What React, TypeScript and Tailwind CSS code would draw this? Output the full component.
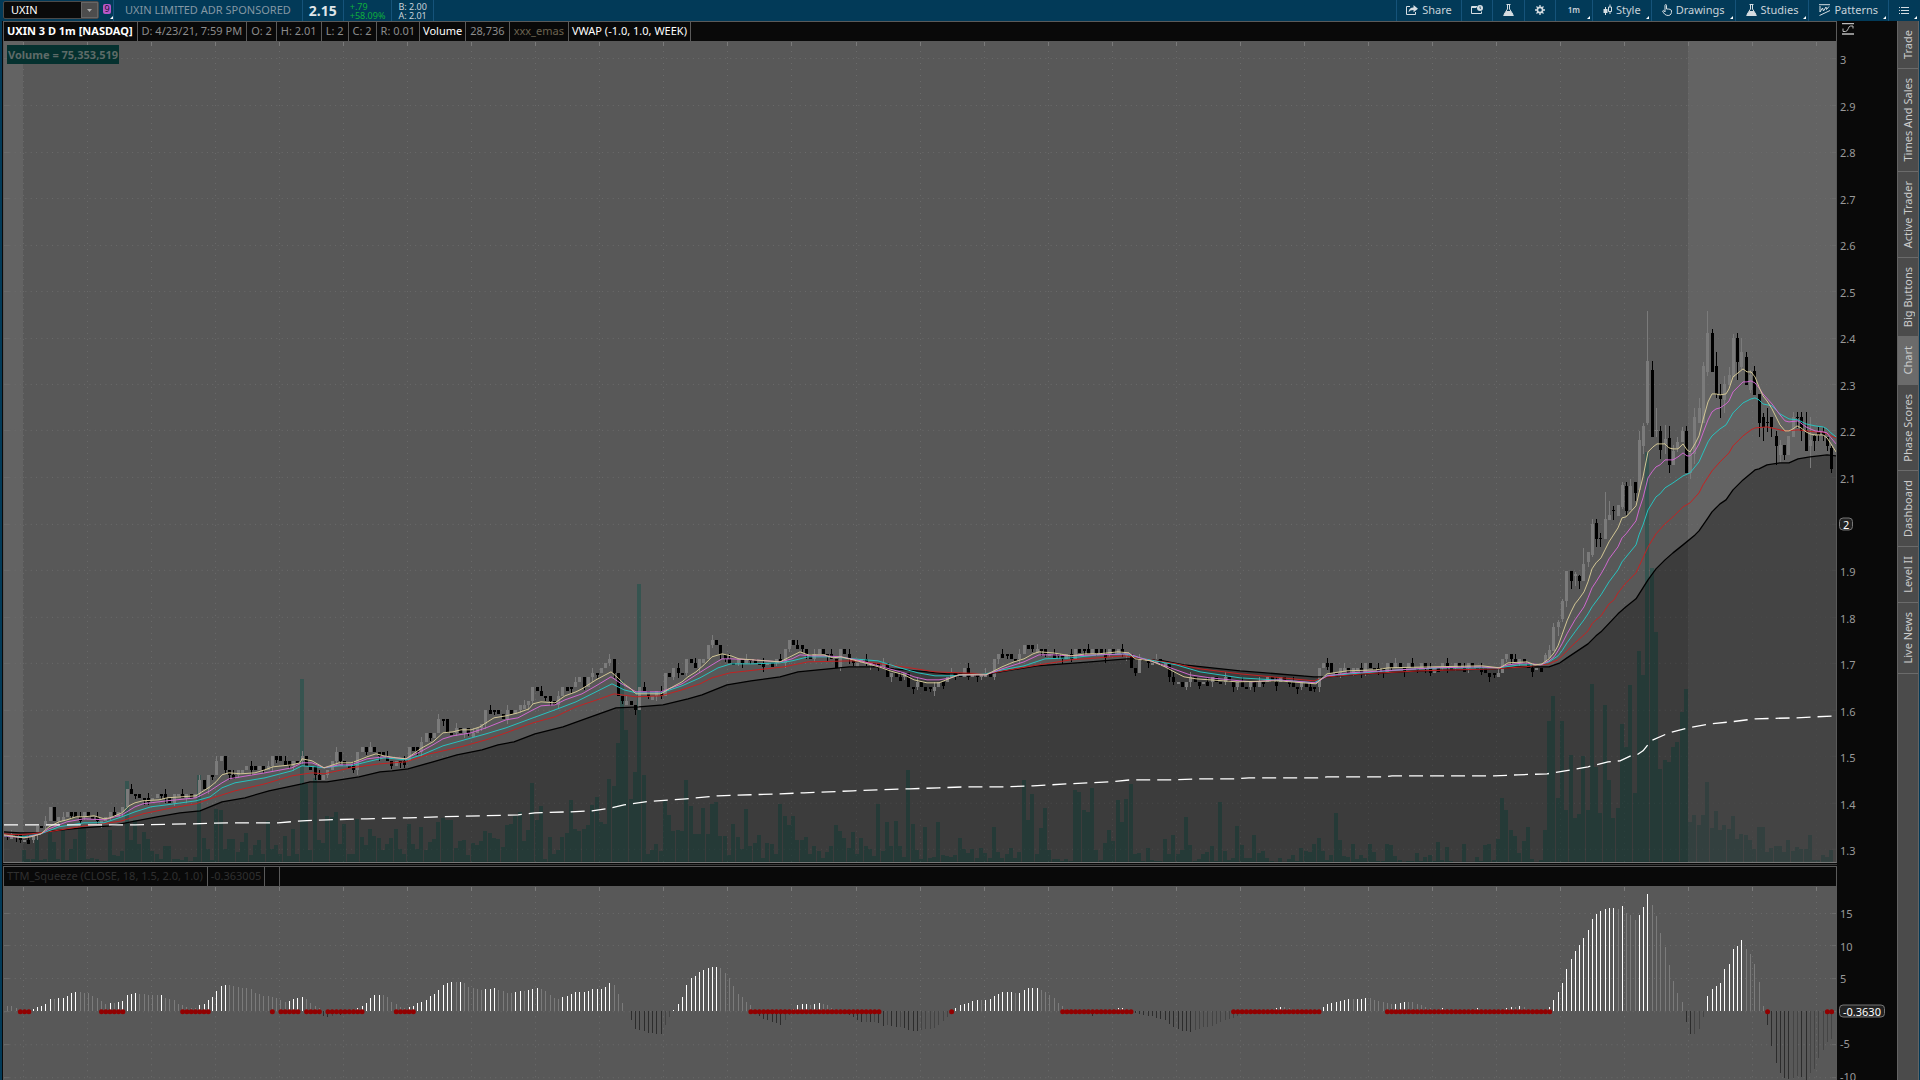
import { useState } from "react";
import type { ReactNode } from "react";
import clsx from "clsx";

const BAR = 4.272;
const FIRST_BAR = 7;
const barX = (i: number) => FIRST_BAR + i * BAR;
const priceY = (cents: number) => 524 + (200 - cents) * 4.65;
const nums = (s: string) => s.trim().split(/\s+/).map(Number);

// closes in cents, one per bar, up to the afternoon breakout
const CLOSES = nums(`
133 133 133 132 132 132 133 135 135 136 139 136 137 137 138 138 137 137 138 137
137 136 136 137 138 137 138 139 143 142 142 141 141 141 141 142 142 141 140 142
142 141 142 141 142 145 143 146 146 149 150 147 146 146 147 147 148 148 147 148
147 148 150 150 149 149 148 149 149 150 148 148 146 145 146 147 149 151 149 148
148 147 151 152 151 152 151 151 150 149 148 149 149 149 152 152 151 153 155 154
155 158 158 155 155 156 155 156 155 155 156 157 160 160 160 159 158 160 159 160
161 161 162 165 164 163 163 162 161 163 165 165 165 166 167 165 167 168 168 169
170 171 168 163 162 162 161 160 165 164 163 163 164 163 168 167 169 168 168 171
170 169 171 171 174 175 174 172 171 170 170 171 170 171 171 170 170 170 170 170
171 170 173 175 174 174 173 172 171 172 173 172 172 171 169 173 172 171 170 170
171 170 170 170 169 170 167 168 167 167 168 165 165 166 165 165 165 165 166 166
167 168 168 167 169 167 168 167 168 168 167 171 172 172 172 171 171 172 174 174
173 173 173 172 172 172 172 171 172 171 173 173 173 172 173 173 172 172 173 172
173 172 172 169 168 171 171 170 170 171 170 170 167 166 166 165 166 167 166 166
166 166 167 166 166 167 166 165 166 165 165 166 165 166 166 167 166 166 167 166
166 165 165 166 165 165 165 169 170 170 168 168 169 169 168 169 169 168 170 169
169 169 168 170 169 170 169 169 170 169 169 170 169 168 169 169 170 169 169 170
169 169 170 169 169 169 168 168 168 168 171 172 171 170 171 170 169 169 169 169`);

// wider swings after the breakout: high, body top, body bottom, low, 1 = up
const SWINGS = `
653 655 662 662 1|645 650 658 658 1|623 627 651 651 1|620 622 627 636 1|599 601 619 622 1
571 571 601 607 1|571 571 581 589 0|572 574 576 586 1|575 576 581 589 0|548 564 581 581 1
552 552 562 567 1|519 524 555 557 1|519 523 539 547 0|533 538 539 547 0|492 519 539 539 1
501 515 520 520 1|506 510 511 520 0|505 505 516 516 1|482 485 507 509 1|482 486 511 515 0
479 486 510 510 1|482 482 493 501 0|431 440 490 490 1|423 426 446 454 1|311 361 423 425 1
361 370 437 437 0|408 430 431 437 1|426 431 450 459 0|425 439 444 454 1|426 438 465 473 0
445 451 465 465 1|437 442 448 452 1|427 431 442 442 1|426 431 473 473 0|450 453 473 479 1
408 417 454 464 1|398 408 423 423 1|362 366 423 423 1|311 333 372 376 1|329 333 372 372 0
352 366 394 398 0|384 395 399 418 0|376 384 400 413 1|367 375 385 385 1|334 338 377 377 1
333 338 362 380 0|338 352 367 370 1|352 357 385 385 0|370 375 390 393 1|366 371 395 395 0
394 394 423 437 0|413 417 427 441 0|408 422 423 432 0|417 417 427 437 0|431 436 446 465 0
440 445 455 463 1|445 445 455 460 0|436 436 455 455 1|412 417 437 437 1|412 417 418 428 0
412 417 431 441 0|412 431 451 451 0|417 440 446 468 1|435 436 441 451 0|427 432 435 441 0
427 432 435 441 0|437 437 446 451 0|446 448 469 473 0`
  .trim()
  .split(/[|\n]/)
  .map(nums);

const VOLUME = nums(`
0 0 0 0 12 3 3 23 2 3 31 20 3 32 2 13 23 37 35 3
4 3 1 1 32 7 6 11 81 22 42 18 30 23 11 8 3 16 16 3
3 2 5 1 5 87 24 13 2 53 52 13 23 23 10 20 29 7 17 22
8 41 13 17 8 26 6 33 8 183 78 12 84 22 19 46 45 50 18 38
8 8 43 25 17 33 26 24 12 18 24 33 13 8 38 18 13 35 12 20
23 40 44 42 42 14 21 22 7 19 17 21 31 29 24 23 15 37 38 46
50 21 32 79 42 56 3 25 8 12 25 29 62 33 31 33 37 57 65 40
38 83 76 119 182 132 63 90 278 87 8 12 18 11 61 47 31 32 31 82
56 28 28 54 28 58 60 26 26 7 38 25 13 53 16 19 27 4 19 18
8 58 46 37 46 22 22 25 8 16 11 4 10 16 37 31 24 14 30 8
24 16 13 6 58 11 40 16 41 16 5 92 38 12 3 35 4 5 40 7
6 5 7 24 13 9 13 4 14 9 4 35 10 4 8 14 4 10 82 42
68 8 34 54 12 3 3 1 3 1 72 70 52 50 74 12 2 19 32 21
62 40 63 78 8 9 1 14 2 1 1 23 8 27 8 12 45 17 1 3
8 10 16 1 60 11 2 4 36 17 4 4 27 9 11 4 1 0 4 0
3 7 1 14 11 10 18 24 11 2 7 49 22 6 5 18 3 7 4 18
10 1 1 18 17 6 2 0 1 1 9 1 5 7 1 20 2 15 1 0
0 18 0 0 5 1 17 18 2 23 64 52 32 26 9 21 35 3 0 2
32 141 166 64 141 52 107 44 48 106 52 178 95 49 157 82 44 54 138 115
177 69 211 187 410 294 230 93 102 100 115 120 150 173 40 47 37 47 80 34
51 32 37 33 46 23 28 27 22 13 35 35 10 14 16 16 10 22 11 15
13 13 27 2 2 7 5 12`);

const MOMENTUM = nums(`
5 5 3 0 0 1 2 4 5 7 12 12 13 13.5 15 18 19 19 18 18
15 13 10 7 8 8 9 10 16 17 18 17 17 16 16 16 16.5 13 12 11
7 6 4 3 3 6 7 11 14 20 25 26 26 25 24 23 23 22 18 17
15 15 14 13 11 9 10 12 13 14 12 8 5 3 -5 -6 -5 -3 -4 -2
-3 0 3 5 8 13 16 16.5 16 14 9 7 4 3 4 5 8 9 11 15
17 21 26 28 29 29 29.5 28 24 23 22 21 22 22.5 23 21 20 18 18 19
20 20 21 22 23 22 20 16 13 12 14 15 17 19 19.3 19.6 20 22 22.3 22.6
24 28 26 17 8 0 -9 -18 -19 -20 -22 -22.2 -22.4 -22.6 -14 -6 1 7 14 26
33 35 39 41 43 44 44.5 43 38 33 25 17 14 9 6 -2 -5 -8 -9 -11
-12 -14 -9 -4 2 6 7 7.5 6 7 8 7 6 3 0 0 -2 -4 -6 -9
-11 -11 -11.2 -11 -12 -15 -14 -15 -16 -16 -17 -19 -20 -20.2 -19 -18 -18 -17 -14 -10
-6 -1 3 6 7 8 10 11 11 11.5 12 15 17 19 19.2 19.4 18 18.5 21 23
23.2 23.4 21 19 16 13 8 5 2 0 -1 -1 -2 -3 -5 -3 0 0 1 1
3 3.2 0 -1 -2 -3 -4 -5 -5.2 -7 -8 -9 -13 -16 -18 -20 -20.2 -20.4 -19 -18
-16 -16 -15 -13 -11 -9 -8 -7 -5 -3 -1 -1 -1 -1 -1 0 0 3 4 4
3 2 0 0 0 0 0 1 4 7 8 9 10 11 12 12 12.3 12.6 13 13
11 10 9 8 7 7.5 8 9 9 9 7 6 4 3 1 1 3 1 1 0
0 0 0 1 3 0 0 0 0 0 1 3 4 4 5 4 1 0 0 0
1 4 11 19 28 42 52 60 66 73 81 92 97 100 102 103 103.3 102 105 98
96 91 96 104 117 106 95 78 64 46 30 18 9 -11 -23 -23 -18 -6 15 22
25 28 42 47 62 65 71 62 57 47 29 5 -14 -35 -52 -62 -67 -68 -67 -65
-66 -69 -62 -58 -47 -39 -31 -28`);

// inclusive bar ranges where the squeeze is on
const SQUEEZES = [
  [3, 5], [22, 27], [41, 47], [62, 62], [64, 68], [70, 73], [75, 83], [91, 95],
  [174, 204], [221, 221], [247, 263], [287, 307], [323, 361], [412, 412], [426, 427],
];

const EMA_FAST =
  "4,835 16,837 24,838 31,837 41,834 49,827 59,822 67,820 76,817 84,817 94,816 104,819 110,818 122,813 129,806 135,803 143,801 159,800 167,798 196,796 202,792 210,787 216,782 222,775 229,773 241,774 255,773 265,770 273,767 292,765 300,763 302,759 312,761 324,768 333,765 339,763 351,763 357,761 367,757 376,754 384,756 396,758 406,759 412,755 422,748 433,742 443,733 453,732 461,730 471,730 480,727 486,723 494,718 506,716 518,713 529,709 533,704 541,702 555,703 565,696 576,692 582,689 596,680 611,672 618,678 624,684 631,689 636,694 661,694 669,689 682,682 688,677 696,672 704,665 712,657 722,654 731,656 739,659 753,660 780,662 786,659 792,656 800,652 808,655 824,655 833,658 841,657 853,660 861,662 882,668 890,671 904,675 914,680 927,683 939,683 951,678 959,675 986,675 992,672 1002,667 1014,662 1024,659 1033,654 1039,652 1053,653 1071,656 1086,654 1098,654 1118,652 1129,653 1135,659 1151,661 1165,667 1176,673 1184,677 1196,679 1237,682 1278,681 1316,684 1327,674 1347,671 1376,670 1388,668 1433,667 1482,666 1500,668 1508,663 1527,662 1535,665 1542,664 1549,659 1554,653 1558,646 1562,635 1567,621 1571,612 1575,604 1579,599 1584,592 1588,582 1592,569 1596,563 1601,558 1605,550 1609,542 1618,528 1622,518 1626,517 1636,506 1639,493 1643,477 1648,452 1653,447 1657,444 1665,444 1669,448 1673,449 1678,449 1683,444 1687,450 1690,452 1695,444 1699,436 1703,420 1708,402 1712,394 1716,394 1720,395 1726,394 1729,389 1733,377 1738,373 1743,369 1747,372 1751,372 1755,377 1759,387 1763,396 1767,401 1772,409 1780,425 1785,431 1789,431 1793,429 1797,426 1801,428 1806,432 1810,434 1815,435 1823,435 1827,438 1831,444 1836,452";
const EMA_MID =
  "4,836 24,838 41,834 49,829 67,822 84,819 104,820 122,815 135,807 143,804 167,801 196,798 210,791 222,783 229,779 241,777 265,773 292,768 302,763 312,763 324,768 339,765 351,765 367,759 384,757 396,758 406,759 422,751 433,745 443,739 453,736 471,733 486,728 506,720 518,718 533,710 541,706 555,705 565,700 582,694 596,686 611,677 620,683 636,692 661,692 669,689 682,684 696,675 712,665 722,659 731,659 753,660 780,662 792,659 800,655 812,656 824,656 841,657 861,661 882,667 904,673 914,677 927,680 939,680 951,678 959,675 986,675 1002,669 1024,662 1039,655 1053,655 1071,656 1098,655 1129,654 1140,658 1160,664 1176,670 1190,675 1210,678 1240,681 1253,682 1278,680 1316,683 1327,676 1350,673 1400,670 1432,668 1480,667 1498,668 1508,665 1524,663 1541,665 1549,661 1554,657 1558,651 1562,644 1567,634 1575,620 1584,607 1588,598 1592,588 1596,582 1601,574 1605,567 1609,559 1618,547 1622,538 1626,534 1636,521 1639,510 1643,498 1648,478 1652,472 1656,467 1660,465 1665,460 1673,460 1678,457 1683,453 1687,456 1690,456 1695,451 1699,444 1703,433 1708,420 1712,412 1716,409 1720,408 1726,404 1729,401 1733,392 1738,387 1743,382 1747,382 1751,381 1755,383 1759,388 1763,394 1772,404 1780,415 1785,421 1789,422 1798,421 1806,427 1815,431 1823,432 1827,433 1831,438 1836,444";
const EMA_SLOW =
  "4,836 24,837 41,834 59,827 84,823 104,823 122,817 135,812 151,807 167,805 196,801 210,797 222,788 235,783 265,778 292,771 302,766 316,767 324,768 339,766 351,766 367,762 384,758 406,760 422,755 443,746 461,741 486,734 506,728 533,718 555,710 576,702 600,690 612,684 624,690 636,693 661,693 682,686 700,678 718,668 731,664 753,664 780,663 792,661 808,657 833,657 853,659 878,661 900,668 918,673 935,676 951,676 965,675 986,674 1002,670 1024,666 1045,659 1071,658 1098,655 1125,654 1140,658 1160,662 1176,665 1200,672 1240,678 1290,681 1314,683 1327,676 1363,673 1400,670 1440,668 1498,668 1520,665 1540,665 1549,662 1558,656 1562,651 1567,643 1575,632 1584,620 1588,614 1592,607 1601,595 1609,582 1618,570 1622,562 1636,545 1639,535 1643,525 1648,510 1656,497 1660,494 1665,488 1673,483 1683,476 1690,473 1699,462 1703,453 1708,442 1712,436 1720,429 1726,425 1733,413 1738,408 1743,403 1751,399 1755,398 1759,400 1763,404 1772,406 1780,414 1789,419 1798,420 1806,424 1815,426 1823,427 1827,429 1831,433 1836,437";
const EMA_LONG =
  "4,834 16,835 31,834 49,832 67,829 92,825 110,823 122,821 143,814 167,809 196,804 216,797 235,791 265,784 292,776 312,773 324,774 351,768 380,764 406,762 430,754 461,747 486,740 506,733 533,723 555,717 576,707 600,699 614,694 636,697 661,696 682,690 700,684 712,678 730,673 757,670 784,667 808,662 853,661 882,664 910,668 935,672 959,673 986,674 1010,670 1039,665 1071,660 1098,658 1125,656 1145,659 1176,664 1200,669 1240,674 1314,681 1327,677 1363,674 1420,671 1494,669 1525,667 1549,664 1558,660 1562,656 1567,651 1575,643 1584,635 1588,631 1592,624 1596,620 1601,616 1609,604 1614,600 1618,593 1626,583 1636,573 1643,558 1648,547 1656,534 1665,524 1673,517 1683,507 1690,503 1699,493 1703,485 1712,471 1720,462 1729,453 1733,446 1738,441 1743,436 1751,430 1755,428 1767,427 1776,429 1785,431 1798,430 1815,432 1823,432 1831,436 1836,438";
const EMA_BASE =
  "4,832 20,833 41,833 53,831 82,828 110,826 131,822 157,817 180,813 200,811 222,802 245,798 269,791 302,784 310,782 327,782 359,777 380,772 392,771 408,769 433,762 457,755 482,750 498,745 514,742 535,734 563,727 588,718 616,708 639,707 663,705 688,699 702,695 727,685 751,681 780,677 798,672 849,667 878,667 894,669 927,672 947,674 988,674 1000,672 1037,666 1090,662 1127,659 1140,659 1163,661 1184,665 1240,671 1314,677 1327,677 1363,674 1420,671 1494,669 1520,667 1549,667 1560,663 1567,658 1588,644 1596,636 1601,632 1618,614 1626,607 1636,599 1648,580 1656,569 1665,560 1673,553 1683,545 1695,535 1699,531 1708,518 1712,512 1720,504 1726,500 1733,490 1743,480 1755,470 1759,469 1767,465 1780,463 1789,463 1798,459 1810,457 1827,455 1836,456";
const VWAP =
  "4,825 135,825 192,824 229,823 278,823 302,821 327,820 367,819 408,818 441,817 482,816 518,815 535,813 571,812 592,811 612,808 624,805 645,802 686,799 718,796 780,794 804,793 853,791 878,790 910,789 939,788 967,787 1004,787 1033,786 1069,784 1110,782 1131,780 1171,780 1204,779 1237,779 1249,778 1318,778 1327,777 1384,777 1392,776 1494,776 1518,775 1547,774 1571,770 1588,767 1608,762 1620,761 1631,756 1637,755 1643,751 1651,741 1669,733 1688,728 1710,724 1731,722 1755,719 1796,718 1816,717 1837,716";

const PRICES = [3, 2.9, 2.8, 2.7, 2.6, 2.5, 2.4, 2.3, 2.2, 2.1, 2, 1.9, 1.8, 1.7, 1.6, 1.5, 1.4, 1.3];
const LEVELS = [15, 10, 5, 0, -5, -10];
const TIMES = Array.from({ length: 29 }, (_, k) => Math.round(23 + k * 64.04) + 0.5);

const PRICE_TOP = 41;
const PRICE_HEIGHT = 821;
const MOM_TOP = 886;
const MOM_HEIGHT = 194;
const MOM_ZERO = 1011;
const AFTER_HOURS = 394;

function candleAt(i: number) {
  if (i >= 360) {
    const [high, top, bottom, low, up] = SWINGS[i - 360];
    return { high, top, bottom, low, up: up === 1 };
  }
  const close = CLOSES[i];
  const open = i ? CLOSES[i - 1] : close;
  const flat = open === close;
  const up = close > open || (flat && i % 3 === 1);
  const top = priceY(Math.max(open, close));
  const bottom = flat ? top + (i % 2 ? 4 : 2) : priceY(Math.min(open, close));
  return {
    high: top - (i % 4 === 1 ? 5 : 0),
    top,
    bottom,
    low: bottom + (i % 5 === 2 ? 5 : i % 3 === 0 ? 3 : 0),
    up,
  };
}

function Grid({ top, height, rows }: { top: number; height: number; rows: number[] }) {
  return (
    <g stroke="#6b6b6b">
      {rows.map((y) => (
        <g key={y}>
          <line x1="4" x2="1836" y1={y} y2={y} strokeDasharray="1 4.34" />
          <line x1="4" x2="9" y1={y} y2={y} />
          <line x1="1832" x2="1836" y1={y} y2={y} />
        </g>
      ))}
      {TIMES.map((x) => (
        <g key={x}>
          <line x1={x} x2={x} y1={top + 10} y2={top + height} strokeDasharray="1 5" />
          <line x1={x} x2={x} y1={top + 1} y2={top + 5} stroke="#7a7a7a" />
        </g>
      ))}
    </g>
  );
}

function PriceChart() {
  return (
    <svg className="absolute inset-0 h-full w-full" viewBox={`4 ${PRICE_TOP} 1832 ${PRICE_HEIGHT}`} preserveAspectRatio="none" role="img" aria-label="UXIN price">
      <rect x="4" y="41" width="1832" height="821" fill="#585858" />
      <rect x="4" y="41" width="19" height="821" fill="#636363" />
      <rect x="1688" y="41" width="148" height="821" fill="#636363" />
      <Grid top={PRICE_TOP} height={PRICE_HEIGHT} rows={PRICES.map((p) => Math.floor(priceY(p * 100)) + 0.5)} />
      <g fill="#005045" shapeRendering="crispEdges">
        {VOLUME.map((v, i) => (
          <rect key={i} x={barX(i) - 2} y={862 - v} width="4" height={v} fillOpacity={i < AFTER_HOURS ? 0.38 : 0.24} />
        ))}
      </g>
      <polygon points={`4,862 ${EMA_BASE} 1836,862`} fill="#000" fillOpacity="0.31" />
      <g shapeRendering="crispEdges">
        {Array.from({ length: 428 }, (_, i) => {
          const c = candleAt(i);
          const x = Math.round(barX(i));
          return (
            <g key={i} fill={c.up ? "#7b7b7b" : "#000"}>
              <rect x={x} y={c.high} width="1" height={Math.max(c.low - c.high, 1)} />
              <rect x={x - 1} y={c.top} width="3" height={Math.max(c.bottom - c.top, 1)} />
            </g>
          );
        })}
      </g>
      <g fill="none" strokeLinejoin="round">
        <polyline points={EMA_BASE} stroke="#000" strokeWidth="1.3" />
        <polyline points={EMA_LONG} stroke="#c32222" />
        <polyline points={EMA_SLOW} stroke="#27c3c0" />
        <polyline points={EMA_MID} stroke="#cf68cf" />
        <polyline points={EMA_FAST} stroke="#d3c795" />
        <polyline points={VWAP} stroke="#fff" strokeWidth="1.3" strokeDasharray="14 7" />
      </g>
    </svg>
  );
}

function momentumColor(i: number) {
  const v = MOMENTUM[i];
  const prev = i ? MOMENTUM[i - 1] : v;
  if (v > 0) return v > prev ? "#fff" : "#7b7b7b";
  return v < prev ? "#2c2c2c" : "#444";
}

function SqueezeChart() {
  return (
    <svg className="absolute inset-0 h-full w-full" viewBox={`4 ${MOM_TOP} 1832 ${MOM_HEIGHT}`} preserveAspectRatio="none" role="img" aria-label="TTM Squeeze">
      <rect x="4" y="886" width="1832" height="194" fill="#585858" />
      <Grid top={MOM_TOP} height={MOM_HEIGHT} rows={LEVELS.map((l) => Math.round(MOM_ZERO - l * 6.56) + 0.5)} />
      <g shapeRendering="crispEdges">
        {MOMENTUM.map((v, i) => (
          <rect key={i} x={Math.round(barX(i))} y={v > 0 ? MOM_ZERO - v : MOM_ZERO} width="1" height={Math.abs(v)} fill={momentumColor(i)} />
        ))}
      </g>
      <g fill="#920000">
        {SQUEEZES.flatMap(([from, to]) =>
          Array.from({ length: to - from + 1 }, (_, k) => (
            <circle key={from + k} cx={barX(from + k) + 0.5} cy={MOM_ZERO + 0.5} r="2.5" />
          )),
        )}
      </g>
    </svg>
  );
}

function AxisLabel({ at, current, children }: { at: number; current?: boolean; children: ReactNode }) {
  return (
    <span
      className={clsx(
        "absolute -translate-y-1/2 text-[11px] leading-[11px]",
        current ? "left-[2px] rounded border border-[#777] bg-[#222] px-[3px] text-white" : "left-[3px] text-[#999]",
      )}
      style={{ top: `${at}%` }}
    >
      {children}
    </span>
  );
}

function Cell({ className, children }: { className?: string; children?: ReactNode }) {
  return <span className={clsx("flex items-center border-r border-[#5a5a5a] px-1 whitespace-pre", className)}>{children}</span>;
}

function Flask() {
  return (
    <svg className="h-3 w-[11px]" viewBox="0 0 11 12" fill="none" stroke="#d5dde2">
      <path d="M3.500.5h4M4.500 1v4L1 10.500M6.500 1v4L10 10.500" />
      <path d="M3.300 7h4.400L11 12H0z" fill="#d5dde2" stroke="none" />
    </svg>
  );
}

const TOOLS: { label: string; text?: string; menu?: boolean; pad: string; icon: ReactNode }[] = [
  {
    label: "Share",
    text: "Share",
    pad: "px-[9px]",
    icon: (
      <svg className="h-3 w-3" viewBox="0 0 12 12" fill="none" stroke="#d5dde2">
        <path d="M4 2.500H.5v8h9V8" />
        <path d="M2.500 8.500c.2-3.500 2-5 5-5V1L12 4.700 7.500 8.200V6C5 6 3.500 6.800 2.500 8.500z" fill="#d5dde2" stroke="none" />
      </svg>
    ),
  },
  {
    label: "Detach",
    pad: "px-[9px]",
    icon: (
      <svg className="h-3 w-3" viewBox="0 0 12 12" fill="none" stroke="#d5dde2">
        <path d="M6 2.500H.5v7h10V7.500" />
        <path d="M0 3.500h5.500" />
        <circle cx="9" cy="4" r="3" fill="#d5dde2" stroke="none" />
        <path d="M9 2.300v2h1" stroke="#023a58" strokeWidth=".8" />
      </svg>
    ),
  },
  { label: "Lab", pad: "px-[10px]", icon: <Flask /> },
  {
    label: "Settings",
    pad: "px-[9px]",
    icon: (
      <svg className="h-3 w-3" viewBox="0 0 12 12" fill="none" stroke="#d5dde2">
        <circle cx="6" cy="6" r="2.600" strokeWidth="1.600" />
        <path d="M6 1v2M6 9v2M1 6h2M9 6h2M2.500 2.500l1.400 1.400M8.100 8.100l1.400 1.400M2.500 9.500l1.400-1.400M8.100 3.900l1.400-1.400" strokeWidth="1.300" />
      </svg>
    ),
  },
  { label: "Timeframe", menu: true, pad: "px-3", icon: <span className="text-[8px] leading-3 font-semibold">1m</span> },
  {
    label: "Style",
    text: "Style",
    menu: true,
    pad: "px-[10px]",
    icon: (
      <svg className="h-3 w-[9px]" viewBox="0 0 9 12" fill="none" stroke="#d5dde2">
        <path d="M2.500 3v8M7 .5v2.500M7 7.500v2.500" />
        <path d="M.5 5h4v4h-4z" fill="#d5dde2" stroke="none" />
        <path d="M5.500 3h3v4.500h-3z" />
      </svg>
    ),
  },
  {
    label: "Drawings",
    text: "Drawings",
    menu: true,
    pad: "px-[10px]",
    icon: (
      <svg className="h-3 w-[10px]" viewBox="0 0 10 12" fill="none" stroke="#d5dde2">
        <path d="M3 8V1.300c0-1 1.500-1 1.500 0V5C7.500 5 9.500 5.300 9.500 7c0 2-.3 4.500-3.300 4.500C3.200 11.500 1.800 9.500.6 7 1.200 6 2.300 6.500 3 8z" />
      </svg>
    ),
  },
  { label: "Studies", text: "Studies", menu: true, pad: "px-[10px]", icon: <Flask /> },
  {
    label: "Patterns",
    text: "Patterns",
    menu: true,
    pad: "px-[10px]",
    icon: (
      <svg className="h-3 w-[11px]" viewBox="0 0 11 12" fill="none" stroke="#d5dde2">
        <path d="M0 .7h11M.5 11.500L11 6.500" />
        <path d="M1 2v6l2.500-4 1 3L7 3l.5 2.500L10 2.500" />
      </svg>
    ),
  },
  {
    label: "Menu",
    menu: true,
    pad: "px-[10px]",
    icon: (
      <svg className="h-3 w-[10px]" viewBox="0 0 10 12" stroke="#d5dde2">
        <path d="M0 3.500h1M2 3.500h8M0 6.500h1M2 6.500h8M0 9.500h1M2 9.500h8" />
      </svg>
    ),
  },
];

function Corner() {
  return (
    <svg className="absolute right-[2px] bottom-[2px] h-[3px] w-[3px]" viewBox="0 0 3 3">
      <path d="M3 0v3H0z" fill="#fff" />
    </svg>
  );
}

function Toolbar() {
  const [symbol, setSymbol] = useState("UXIN");

  return (
    <header className="flex h-[21px] shrink-0 items-stretch bg-[#023a58] text-[11px] text-[#c8d2d9]">
      <div className="my-px mr-1 ml-[3px] flex h-[18px] w-24 rounded-xs border border-[#4a4a4a] bg-[#0a0a0a]">
        <input
          aria-label="Symbol"
          value={symbol}
          onChange={(e) => setSymbol(e.target.value.toUpperCase())}
          className="min-w-0 flex-1 bg-transparent pl-[7px] text-[11px] text-white outline-none"
        />
        <button aria-label="Recent symbols" className="flex w-[17px] items-center justify-center border border-[#666] bg-[#4d4d4d]">
          <svg className="h-[3px] w-[5px]" viewBox="0 0 5 3">
            <path d="M0 0h5L2.500 3z" fill="#aaa" />
          </svg>
        </button>
      </div>
      <button aria-label="Link group 9" className="relative w-[11px] border-r border-[#15537a]">
        <span className="absolute top-1 left-0 h-[10px] w-2 rounded-xs bg-[#b857c8] text-[9px] leading-[10px] text-[#1d1030]">9</span>
        <svg className="absolute right-0 bottom-[2px] h-[3px] w-[3px]" viewBox="0 0 3 3">
          <path d="M3 0v3H0z" fill="#fff" />
        </svg>
      </button>
      <span className="flex items-center border-r border-[#15537a] pr-[11px] pb-px pl-[11px] text-[#8497a3]">UXIN LIMITED ADR SPONSORED</span>
      <span className="flex items-center border-r border-[#15537a] px-[6px] text-sm font-bold text-[#dfe5e8]">2.15</span>
      <span className="flex flex-col justify-center border-r border-[#15537a] px-[6px] text-[9px] leading-[9px] text-[#0fae3c]">
        <span>+.79</span>
        <span>+58.09%</span>
      </span>
      <span className="flex flex-col justify-center border-r border-[#15537a] px-[6px] text-[9px] leading-[9px]">
        <span>B: 2.00</span>
        <span>A: 2.01</span>
      </span>
      <nav className="ml-auto flex border-l border-[#15537a]">
        {TOOLS.map((t) => (
          <button key={t.label} aria-label={t.label} className={clsx("relative flex items-center gap-1 border-r border-[#15537a] pb-px last:border-r-0", t.pad)}>
            {t.icon}
            {t.text}
            {t.menu && <Corner />}
          </button>
        ))}
      </nav>
    </header>
  );
}

const TABS = ["Trade", "Times And Sales", "Active Trader", "Big Buttons", "Chart", "Phase Scores", "Dashboard", "Level II", "Live News"];

function SideTabs() {
  const [active, setActive] = useState("Chart");

  return (
    <aside className="flex w-[22px] shrink-0 flex-col border-x border-[#636363] bg-[#4b4b4b]">
      {TABS.map((tab) => (
        <button
          key={tab}
          onClick={() => setActive(tab)}
          className={clsx(
            "flex justify-center border-b border-[#6b6b6b] py-[9px] text-[11px] text-[#ccc]",
            tab === active && "bg-[#6b6b6b]",
          )}
        >
          <span className="rotate-180 leading-5 [writing-mode:vertical-rl]">{tab}</span>
        </button>
      ))}
    </aside>
  );
}

export default function App() {
  return (
    <div className="flex h-screen flex-col overflow-hidden border-r border-[#023a58] bg-[#090909] font-['Noto_Sans','Open_Sans',sans-serif]">
      <Toolbar />
      <div className="flex min-h-0 flex-1 border-l-2 border-[#023a58]">
        <main className="flex min-w-0 flex-1 flex-col pl-px">
          <section className="flex min-h-0 flex-[841_1_0%]">
            <div className="flex min-w-0 flex-1 flex-col border border-b-[#777] border-[#5a5a5a]">
              <div className="flex h-[19px] shrink-0 text-[11px] text-[#8c8c8c]">
                <Cell className="pl-[3px] font-bold text-white">UXIN 3 D 1m [NASDAQ]</Cell>
                <Cell>D: 4/23/21, 7:59 PM</Cell>
                <Cell>O: 2</Cell>
                <Cell>H: 2.01</Cell>
                <Cell>L: 2</Cell>
                <Cell>C: 2</Cell>
                <Cell>R: 0.01</Cell>
                <Cell className="px-[3px] text-white">Volume</Cell>
                <Cell>28,736</Cell>
                <Cell className="text-[#6b6350]">xxx_emas</Cell>
                <Cell className="px-[3px] text-white">VWAP (-1.0, 1.0, WEEK)</Cell>
              </div>
              <div className="relative min-h-0 flex-1">
                <PriceChart />
                <span className="absolute top-1 left-[3px] bg-[#05312f] px-px text-[11px] leading-[19px] font-bold text-[#5e6b68]">Volume = 75,353,519</span>
              </div>
            </div>
            <div className="flex w-[60px] shrink-0 flex-col">
              <button aria-label="Fit price scale" className="flex h-5 items-start pt-[2px] pl-[5px]">
                <svg className="h-3 w-3" viewBox="0 0 12 12" fill="none" stroke="#bbb">
                  <path d="M0 .5h12M0 11h12" strokeWidth="1.500" />
                  <path d="M1 5.500v3h2.500C6.500 8.500 6 3 8.500 3H11v2.500" />
                </svg>
              </button>
              <div className="relative flex-1">
                {PRICES.map((p) => (
                  <AxisLabel key={p} at={((priceY(p * 100) - PRICE_TOP) / PRICE_HEIGHT) * 100} current={p === 2}>
                    {p}
                  </AxisLabel>
                ))}
              </div>
            </div>
          </section>
          <div className="my-px mr-[60px] h-px shrink-0 bg-[#3a3a3a]" />
          <section className="flex min-h-0 flex-[214_1_0%]">
            <div className="flex min-w-0 flex-1 flex-col border border-b-0 border-[#5a5a5a]">
              <div className="flex h-[19px] shrink-0 text-[11px] text-[#303030]">
                <Cell className="pl-[3px]">TTM_Squeeze (CLOSE, 18, 1.5, 2.0, 1.0)</Cell>
                <Cell className="px-[3px]">-0.363005</Cell>
                <Cell className="w-[15px]" />
              </div>
              <div className="relative min-h-0 flex-1">
                <SqueezeChart />
              </div>
            </div>
            <div className="flex w-[60px] shrink-0 flex-col pt-5">
              <div className="relative flex-1">
                {LEVELS.map((l) => (
                  <AxisLabel key={l} at={((MOM_ZERO - l * 6.5 - MOM_TOP) / MOM_HEIGHT) * 100} current={l === 0}>
                    {l === 0 ? "-0.3630" : l}
                  </AxisLabel>
                ))}
              </div>
            </div>
          </section>
        </main>
        <SideTabs />
      </div>
    </div>
  );
}
